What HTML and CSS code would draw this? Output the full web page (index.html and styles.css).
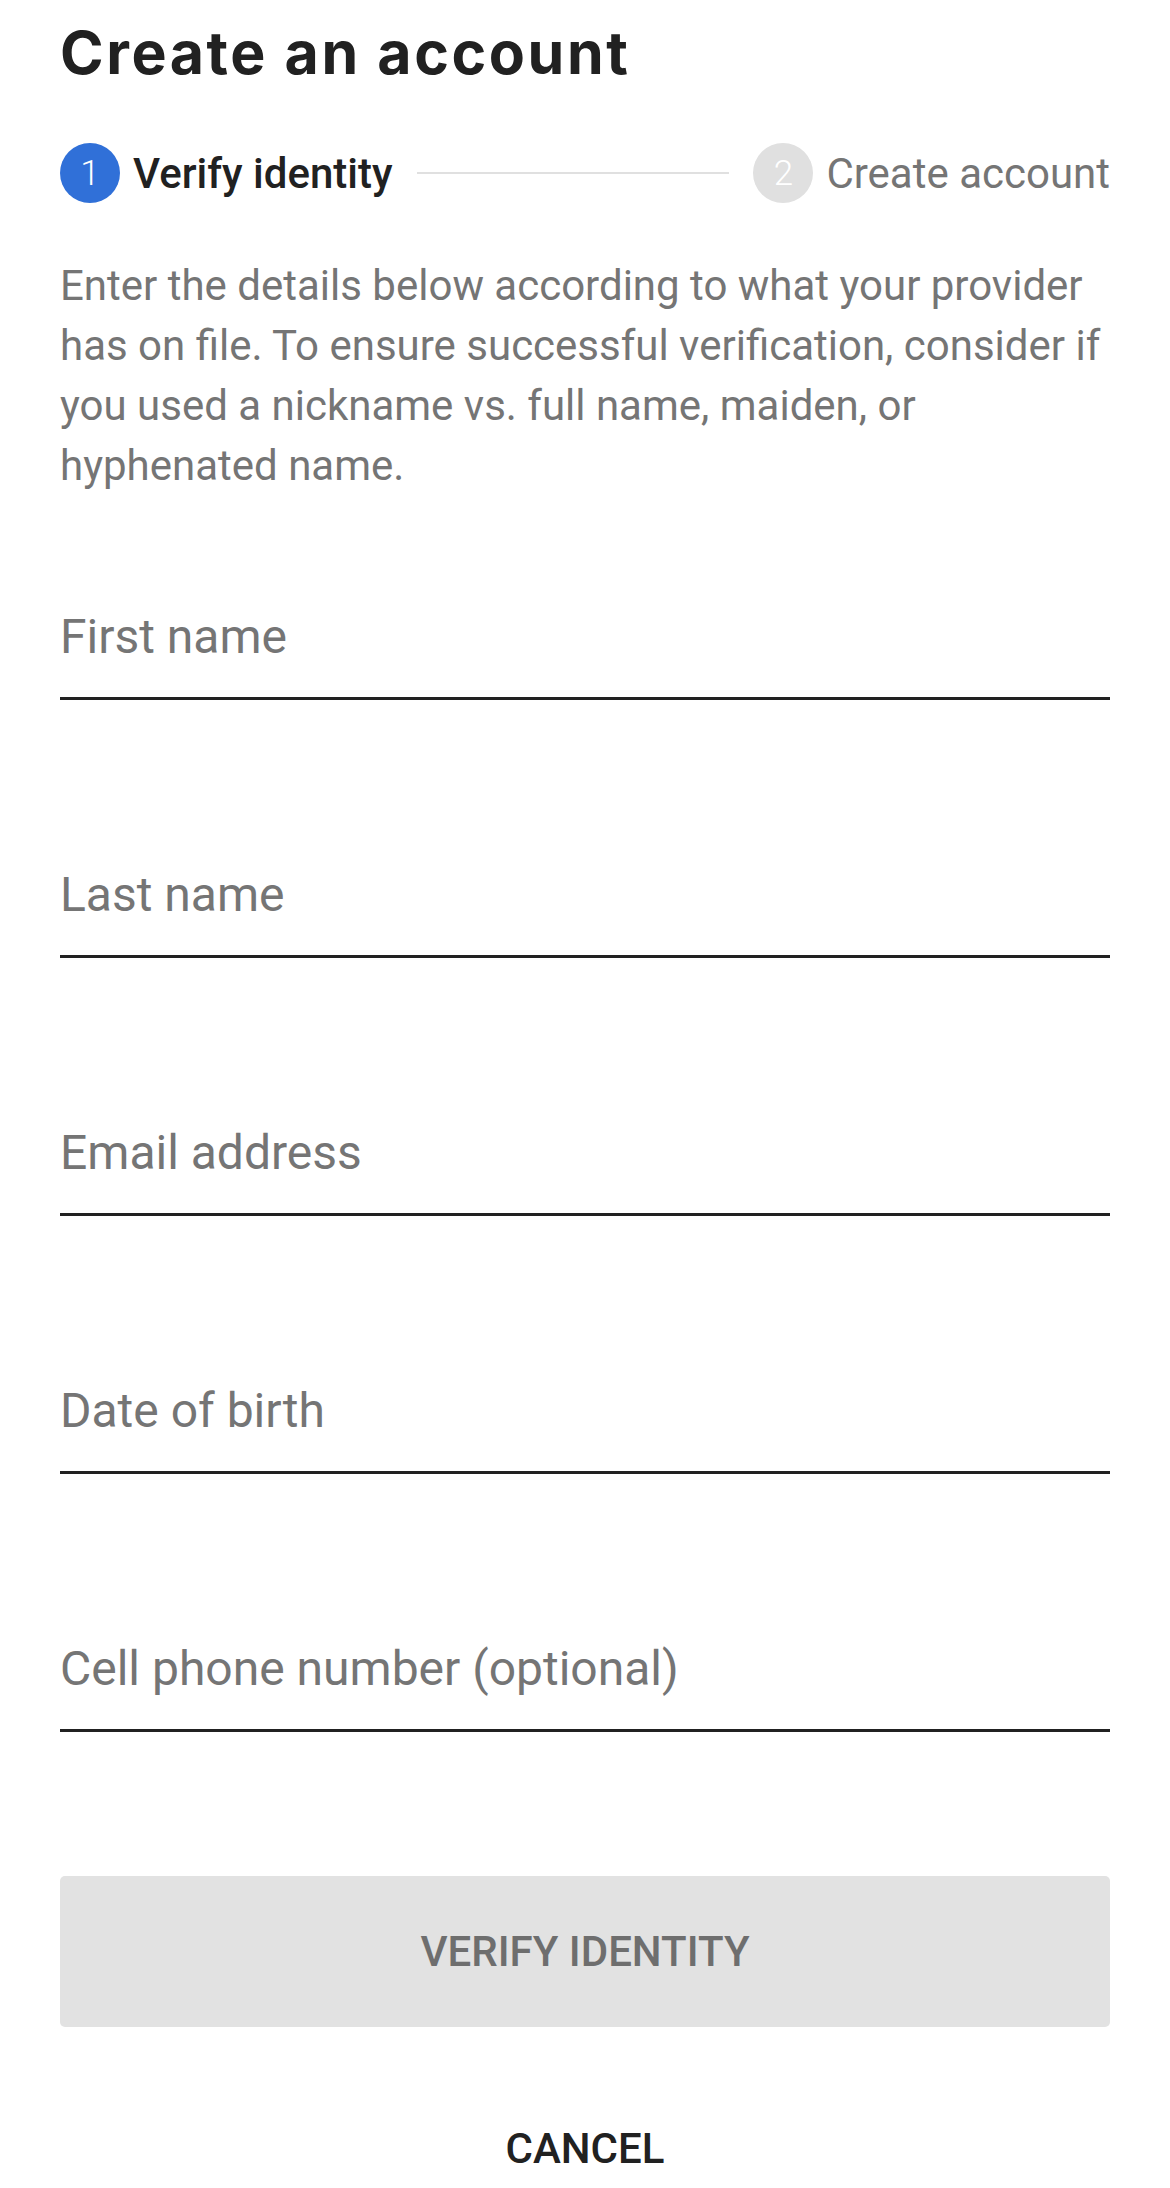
FILE: index.html
```html
<!DOCTYPE html>
<html lang="en">
<head>
    <meta charset="UTF-8">
    <meta name="viewport" content="width=device-width, initial-scale=1.0">
    <title>Create an account</title>
    <link rel="stylesheet" href="styles.css">
</head>
<body>
    <div class="page">
        <h1 class="title">Create an account</h1>

        <!-- Stepper -->
        <div class="stepper">
            <span class="step-num active">1</span>
            <span class="step-label active">Verify identity</span>
            <span class="step-line"></span>
            <span class="step-num">2</span>
            <span class="step-label">Create account</span>
        </div>

        <p class="intro">Enter the details below according to what your provider has on file. To ensure successful verification, consider if you used a nickname vs. full name, maiden, or hyphenated name.</p>

        <form class="form" onsubmit="return false">
            <label class="field"><input type="text" placeholder="First name"></label>
            <label class="field"><input type="text" placeholder="Last name"></label>
            <label class="field"><input type="email" placeholder="Email address"></label>
            <label class="field"><input type="text" placeholder="Date of birth"></label>
            <label class="field"><input type="tel" placeholder="Cell phone number (optional)"></label>

            <button class="btn-verify" disabled>Verify identity</button>
            <button type="button" class="btn-cancel">Cancel</button>
        </form>
    </div>
</body>
</html>
```

FILE: styles.css
```css
body {
    margin: 0;
    background: #fff;
    font-family: Roboto, "Liberation Sans", sans-serif;
    color: #212121;
}

.page {
    padding: 0 60px;
}

.title {
    margin: 0;
    padding-top: 23px;
    font-family: Inter, sans-serif;
    font-weight: 700;
    font-size: 59px;
    line-height: 59px;
    letter-spacing: 2.6px;
    color: #212121;
}

.stepper {
    display: flex;
    align-items: center;
    margin-top: 61px;
    height: 60px;
}

.step-num {
    flex: none;
    width: 60px;
    height: 60px;
    border-radius: 50%;
    background: #e0e0e0;
    color: #fff;
    font-weight: 300;
    font-size: 35px;
    display: flex;
    align-items: center;
    justify-content: center;
}

.step-num.active {
    background: #3070d8;
}

.step-label {
    margin-left: 13px;
    font-size: 42px;
    color: #757575;
}

.step-label.active {
    font-weight: 500;
    color: #212121;
}

.step-line {
    flex: 1;
    height: 2px;
    margin: 0 24px;
    background: #e0e0e0;
}

.intro {
    margin: 53px 0 0;
    font-size: 42px;
    line-height: 60px;
    color: #757575;
}

.form {
    display: flex;
    flex-direction: column;
}

.field {
    display: block;
    margin-top: 167px;
    padding-bottom: 32px;
    border-bottom: 3px solid #212121;
}

.field:first-child {
    margin-top: 113px;
}

.field input {
    display: block;
    width: 100%;
    box-sizing: border-box;
    padding: 0;
    border: none;
    outline: none;
    background: none;
    font-family: Roboto, sans-serif;
    font-size: 48px;
    line-height: 56px;
    height: 56px;
    color: #212121;
}

.field input::placeholder {
    color: #757575;
}

.btn-verify {
    margin-top: 144px;
    height: 151px;
    border: none;
    border-radius: 5px;
    background: #e2e2e2;
    color: #6e6e6e;
    font-family: Roboto, sans-serif;
    font-weight: 500;
    font-size: 42px;
    text-transform: uppercase;
}

.btn-cancel {
    margin: 97px auto 0;
    padding: 0;
    border: none;
    background: none;
    color: #212121;
    font-family: Roboto, sans-serif;
    font-weight: 500;
    font-size: 42px;
    line-height: 50px;
    text-transform: uppercase;
    cursor: pointer;
}
```
